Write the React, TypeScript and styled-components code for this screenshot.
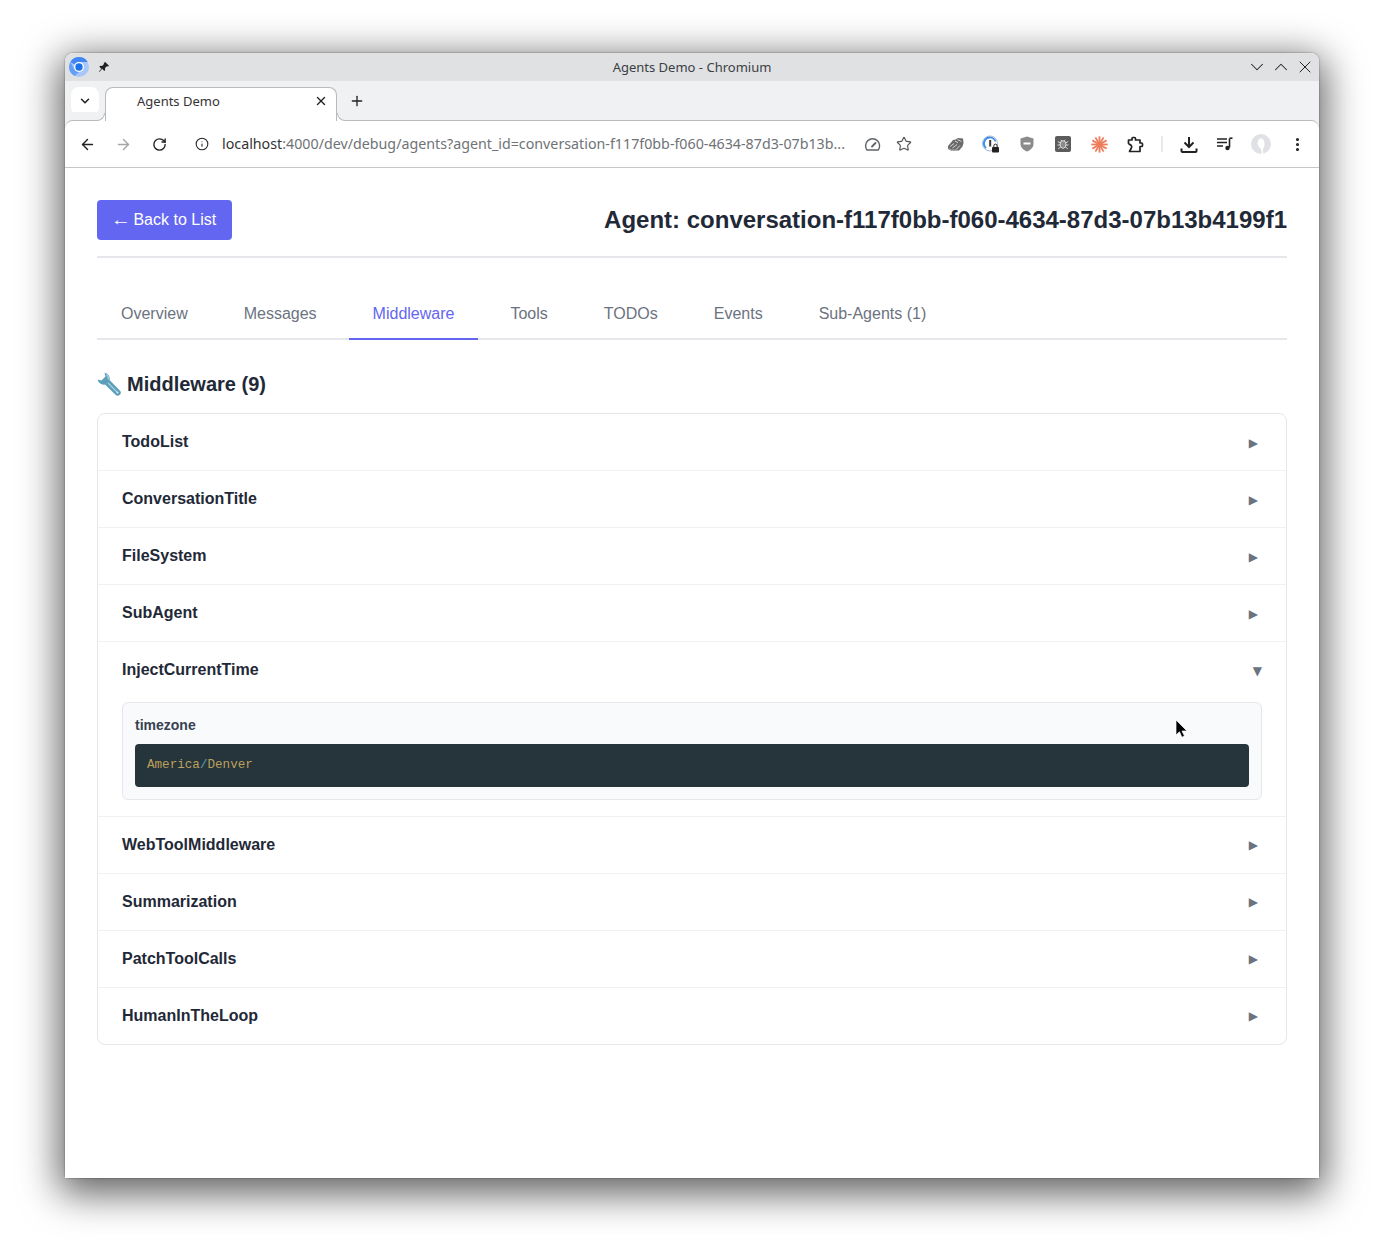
import styled, { createGlobalStyle } from "styled-components";
import {
    ArrowLeft,
    ArrowRight,
    ChevronDown,
    ChevronUp,
    EllipsisVertical,
    Info,
    Plus,
    RotateCw,
    Star,
    X,
} from "lucide-react";

const MIDDLEWARE = [
    "TodoList",
    "ConversationTitle",
    "FileSystem",
    "SubAgent",
    "InjectCurrentTime",
    "WebToolMiddleware",
    "Summarization",
    "PatchToolCalls",
    "HumanInTheLoop",
];

const TABS = ["Overview", "Messages", "Middleware", "Tools", "TODOs", "Events", "Sub-Agents (1)"];

const OPEN_ITEM = MIDDLEWARE.indexOf("InjectCurrentTime");

export default function App() {
    return (
        <Desktop>
            <GlobalStyle />
            <Window>
                <TitleBar>
                    <TitleLeft>
                        <ChromiumLogo />
                        <PinIcon />
                    </TitleLeft>
                    <WindowTitle>Agents Demo - Chromium</WindowTitle>
                    <WindowControls>
                        <ChevronDown size={22} strokeWidth={1.1} />
                        <ChevronUp size={22} strokeWidth={1.1} />
                        <CloseGlyph size={20} strokeWidth={1.2} />
                    </WindowControls>
                </TitleBar>

                <TabStrip>
                    <TabSearch>
                        <ChevronDown size={14} strokeWidth={2.6} />
                    </TabSearch>
                    <BrowserTab>
                        <TabFlare $side="left" />
                        <TabTitle>Agents Demo</TabTitle>
                        <X size={14} strokeWidth={2.4} />
                        <TabFlare $side="right" />
                    </BrowserTab>
                    <NewTab>
                        <Plus size={16} strokeWidth={2} />
                    </NewTab>
                </TabStrip>

                <Toolbar>
                    <ToolSlot><ArrowLeft size={17} strokeWidth={2} /></ToolSlot>
                    <ToolSlot $muted><ArrowRight size={17} strokeWidth={2} /></ToolSlot>
                    <ToolSlot><RotateCw size={15} strokeWidth={2.2} /></ToolSlot>
                    <UrlBar>
                        <Info size={14} strokeWidth={1.8} />
                        <UrlText>
                            localhost<UrlRest>:4000/dev/debug/agents?agent_id=conversation-f117f0bb-f060-4634-87d3-07b13b...</UrlRest>
                        </UrlText>
                    </UrlBar>
                    <UrlAction><GaugeIcon /></UrlAction>
                    <UrlAction><Star size={16} strokeWidth={1.7} color="#555" /></UrlAction>
                    <ExtensionGap />
                    <ToolSlot><ShoeIcon /></ToolSlot>
                    <ToolSlot><KeyBadgeIcon /></ToolSlot>
                    <ToolSlot><ShieldIcon /></ToolSlot>
                    <ToolSlot><BugIcon /></ToolSlot>
                    <ToolSlot><SparkIcon /></ToolSlot>
                    <ToolSlot><PuzzleIcon /></ToolSlot>
                    <ToolDivider />
                    <ToolSlot><DownloadIcon /></ToolSlot>
                    <ToolSlot><QueueIcon /></ToolSlot>
                    <ToolSlot><AvatarIcon /></ToolSlot>
                    <ToolSlot><EllipsisVertical size={17} strokeWidth={2.4} /></ToolSlot>
                </Toolbar>

                <Page>
                    <PageHeader>
                        <BackButton><BackArrow>←</BackArrow> Back to List</BackButton>
                        <AgentTitle>Agent: conversation-f117f0bb-f060-4634-87d3-07b13b4199f1</AgentTitle>
                    </PageHeader>

                    <TabRow>
                        {TABS.map((tab) => (
                            <PageTab key={tab} $active={tab === "Middleware"}>{tab}</PageTab>
                        ))}
                    </TabRow>

                    <SectionTitle>
                        <WrenchIcon />
                        Middleware (9)
                    </SectionTitle>

                    <Accordion>
                        {MIDDLEWARE.map((name, i) => {
                            const open = i === OPEN_ITEM;
                            return (
                                <Item key={name}>
                                    <ItemHeader>
                                        <ItemName>{name}</ItemName>
                                        <Caret $open={open} $below={i > OPEN_ITEM}>{open ? "▼" : "▶"}</Caret>
                                    </ItemHeader>
                                    {open && (
                                        <ItemBody>
                                            <ConfigBox>
                                                <ConfigKey>timezone</ConfigKey>
                                                <CodeBlock>
                                                    America<Slash>/</Slash>Denver
                                                </CodeBlock>
                                            </ConfigBox>
                                        </ItemBody>
                                    )}
                                </Item>
                            );
                        })}
                    </Accordion>
                </Page>
                <Cursor />
            </Window>
        </Desktop>
    );
}

function ChromiumLogo() {
    return (
        <svg width="20" height="20" viewBox="0 0 20 20">
            <circle cx="10" cy="10" r="10" fill="#a8c7fa" />
            <path d="M10 0a10 10 0 0 1 8.660 5H10a5 5 0 0 0-4.330 2.500L1.340 5A10 10 0 0 1 10 0z" fill="#4285f4" />
            <path d="M0 10a10 10 0 0 1 1.340-5l4.330 7.500A5 5 0 0 0 10 15l-4.330 4A10 10 0 0 1 0 10z" fill="#669df6" />
            <circle cx="10" cy="10" r="5" fill="#fff" />
            <circle cx="10" cy="10" r="3.700" fill="#1a73e8" />
        </svg>
    );
}

function PinIcon() {
    return (
        <svg width="12" height="12" viewBox="0 0 12 12">
            <path d="M7.200 1 11 4.800l-1 .6-1.100-.2L7 7.100l.2 1.800-1 1-2-2.100L1.400 11 1 10.600l2.300-2.900-2-2 1-1 1.800.2 1.900-1.900-.2-1.100z" fill="#222" />
        </svg>
    );
}

function GaugeIcon() {
    return (
        <svg width="17" height="17" viewBox="0 0 17 17" fill="none" stroke="#5f6368" strokeWidth="1.400">
            <path d="M3 14h11.200a7 7 0 1 0-11.200 0z" strokeLinejoin="round" />
            <path d="m8 10.500 3.500-3.500" strokeWidth="1.800" strokeLinecap="round" />
        </svg>
    );
}

function ShoeIcon() {
    return (
        <svg width="17" height="15" viewBox="0 0 17 15">
            <path d="M1 9 4 5.500 6 3l2.500-.5L11 1l5 .5.500 4.500-1 3.500-3.500 4H4l-3-1.500z" fill="#6a6a6a" />
            <path d="M3 9.500l4-3M5.500 11l4.500-3.500M9 12.500l4-4M8 4l3 1.500M10.500 2.500l4 2" stroke="#d5d5d5" strokeWidth="1" fill="none" />
            <path d="M1.500 11.500l3 1.500h6" stroke="#a5a5a5" strokeWidth="1" fill="none" />
        </svg>
    );
}

function KeyBadgeIcon() {
    return (
        <svg width="18" height="18" viewBox="0 0 18 18">
            <circle cx="8" cy="8.500" r="7.500" fill="#fff" stroke="#a9b8cc" strokeWidth="1" />
            <path d="M8 2.500a6 6 0 0 0-4 10.500" fill="none" stroke="#3d8fef" strokeWidth="2" />
            <path d="M8 2.500a6 6 0 0 1 5.500 4" fill="none" stroke="#3d8fef" strokeWidth="1.600" />
            <rect x="7.200" y="5" width="2" height="6.500" fill="#3a3a3a" />
            <rect x="10" y="12" width="7" height="5.500" rx="1" fill="#222" />
            <path d="M11.800 12v-1.200a1.700 1.700 0 0 1 3.400 0V12" fill="none" stroke="#222" strokeWidth="1" />
        </svg>
    );
}

function ShieldIcon() {
    return (
        <svg width="14" height="16" viewBox="0 0 14 16">
            <path d="M7 .5 13.500 2.500V8c0 3.500-3 6-6.500 7.500C3.500 14 .5 11.500.5 8V2.500z" fill="#8b8b8b" />
            <rect x="3.500" y="6.500" width="7" height="2" fill="#fff" />
        </svg>
    );
}

function BugIcon() {
    return (
        <svg width="16" height="16" viewBox="0 0 16 16">
            <rect width="16" height="16" rx="2" fill="#5c5c5c" />
            <ellipse cx="8" cy="8.500" rx="3" ry="3.800" fill="#8a8a8a" stroke="#dadada" strokeWidth="1" />
            <path d="M2.800 5.500 5.500 7M13.200 5.500 10.500 7M2.500 9h3M13.500 9h-3M3.200 12.800 5.500 11M12.800 12.800 10.500 11M5.800 3.800 7 5.200M10.200 3.800 9 5.200" stroke="#dadada" strokeWidth="1" />
        </svg>
    );
}

function SparkIcon() {
    const rays = [0, 30, 60, 90, 120, 150, 180, 210, 240, 270, 300, 330];
    return (
        <svg width="17" height="17" viewBox="0 0 17 17">
            {rays.map((r) => (
                <line key={r} x1="8.500" y1="8.500" x2="8.500" y2="0.300" stroke="#ee7d5c" strokeWidth="1.800" transform={`rotate(${r} 8.500 8.500)`} />
            ))}
        </svg>
    );
}

function PuzzleIcon() {
    return (
        <svg width="17" height="17" viewBox="0 0 17 17" fill="none" stroke="#222" strokeWidth="1.700" strokeLinejoin="round">
            <path d="M1.500 4H5V2.500a1 1 0 0 1 1-1h1.500a1 1 0 0 1 1 1V4H13v3h1.500a1 1 0 0 1 1 1v1.500a1 1 0 0 1-1 1H13v5H2.500l1.800-3.500a2 2 0 0 0 0-2.500L1.500 7.500z" />
        </svg>
    );
}

function DownloadIcon() {
    return (
        <svg width="18" height="17" viewBox="0 0 18 17" fill="none" stroke="#222" strokeWidth="2">
            <path d="M9 1v10M4.500 6.500 9 11l4.500-4.500" />
            <path d="M1.500 12.500v2.500a1 1 0 0 0 1 1h13a1 1 0 0 0 1-1v-2.500" />
        </svg>
    );
}

function QueueIcon() {
    return (
        <svg width="16" height="14" viewBox="0 0 16 14" fill="none" stroke="#222" strokeWidth="1.500">
            <path d="M0 2h10M0 5.500h10M0 9h6" />
            <path d="M12.500 1.500v9" strokeWidth="1.600" />
            <path d="M12.500 1.200H15.500" strokeWidth="1.600" />
            <circle cx="10.500" cy="11" r="2.200" fill="#222" stroke="none" />
        </svg>
    );
}

function AvatarIcon() {
    return (
        <svg width="20" height="20" viewBox="0 0 20 20">
            <circle cx="10" cy="10" r="10" fill="#dfe1e4" />
            <path d="M6.500 10c0-3.500 1.500-5.500 3.500-5.500s3.500 2 3.500 5.500c0 3-1.200 4-1.500 5.500-.2 1.500.2 2.500.2 4.500h-1.500c0-3-.5-4-1-5.500-.8-1-2.700-1.500-2.700-4.500z" fill="#fff" />
        </svg>
    );
}

function WrenchIcon() {
    return (
        <WrenchSvg width="24" height="24" viewBox="0 0 24 24">
            <path d="M7.500.7a6 6 0 0 1 5 7.300l10.300 10.500a3 3 0 0 1-4.300 4.300L8 12.500a6 6 0 0 1-7.300-5L4.500 8.500l4-4z" fill="#5c9fba" />
            <path d="M9.500 2.500a4.500 4.500 0 0 1 1.500 5M11 11l9 9" stroke="#a6d2de" strokeWidth="1.300" fill="none" />
            <circle cx="20.500" cy="20.500" r="1" fill="#dff0f5" />
        </WrenchSvg>
    );
}

function Cursor() {
    return (
        <CursorSvg width="14" height="20" viewBox="0 0 14 20">
            <path d="M1 1v15l3.500-3.200 2.400 5.400 2.600-1.100L7 12h5z" fill="#000" stroke="#fff" strokeWidth="0.700" />
        </CursorSvg>
    );
}

const GlobalStyle = createGlobalStyle`
    html, body {
        margin: 0;
        padding: 0;
        background: #fff;
    }

    * {
        box-sizing: border-box;
    }
`;

const Desktop = styled.div`
    width: 1384px;
    height: 1255px;
    padding: 53px 65px 0;
    overflow: hidden;
    background: #fff;
`;

const Window = styled.div`
    position: relative;
    width: 1254px;
    height: 1125px;
    display: flex;
    flex-direction: column;
    background: #fff;
    border-radius: 8px 8px 3px 3px;
    box-shadow: 0 10px 38px 6px rgba(0, 0, 0, 0.62), 0 0 2px rgba(0, 0, 0, 0.5);
`;

const TitleBar = styled.div`
    height: 28px;
    flex: none;
    display: grid;
    grid-template-columns: 1fr auto 1fr;
    align-items: center;
    background: #dfe1e3;
    border-radius: 8px 8px 0 0;
`;

const TitleLeft = styled.div`
    display: flex;
    align-items: center;
    gap: 9px;
    padding-left: 4px;
`;

const WindowTitle = styled.div`
    font-family: "Noto Sans", sans-serif;
    font-size: 13px;
    color: #3c4043;
`;

const WindowControls = styled.div`
    display: flex;
    justify-content: flex-end;
    align-items: center;
    gap: 2px;
    padding-right: 4px;
    color: #222;
`;

const CloseGlyph = styled(X)`
    margin-left: 1px;
`;

const TabStrip = styled.div`
    height: 39px;
    flex: none;
    display: flex;
    align-items: flex-start;
    padding: 6px 0 0 6px;
    background: #eff1f3;
`;

const TabSearch = styled.div`
    width: 28px;
    height: 28px;
    display: flex;
    align-items: center;
    justify-content: center;
    margin-right: 6px;
    background: #fff;
    border-radius: 8px;
    color: #222;
`;

const BrowserTab = styled.div`
    position: relative;
    z-index: 2;
    width: 232px;
    height: 34px;
    display: flex;
    align-items: center;
    justify-content: space-between;
    padding: 0 8px 8px 31px;
    background: #fff;
    border: 1px solid #b8babd;
    border-bottom: none;
    border-radius: 8px 8px 0 0;
    color: #222;
`;

const TabFlare = styled.span<{ $side: "left" | "right" }>`
    position: absolute;
    bottom: 0;
    ${(p) => (p.$side === "left" ? "left: -9px;" : "right: -9px;")}
    width: 8px;
    height: 8px;
    background: #fff;

    &::before {
        content: "";
        position: absolute;
        inset: 0;
        background: #eff1f3;
        border-bottom: 1px solid #b8babd;
        ${(p) =>
            p.$side === "left"
                ? "border-right: 1px solid #b8babd; border-bottom-right-radius: 8px;"
                : "border-left: 1px solid #b8babd; border-bottom-left-radius: 8px;"}
    }
`;

const TabTitle = styled.span`
    font-family: "Noto Sans", sans-serif;
    font-size: 13px;
    color: #333;
`;

const NewTab = styled.div`
    width: 28px;
    height: 28px;
    margin-left: 6px;
    display: flex;
    align-items: center;
    justify-content: center;
    color: #222;
`;

const Toolbar = styled.div`
    height: 48px;
    flex: none;
    display: flex;
    align-items: center;
    padding: 0 4px;
    background: #fff;
    border-top: 1px solid #b8babd;
    border-bottom: 1px solid #c4c6c9;
    border-radius: 8px 8px 0 0;
    box-shadow: 0 -8px 0 #eff1f3;
`;

const ToolSlot = styled.div<{ $muted?: boolean }>`
    width: 36px;
    height: 36px;
    flex: none;
    display: flex;
    align-items: center;
    justify-content: center;
    color: ${(p) => (p.$muted ? "#a4a6a9" : "#222")};
`;

const UrlBar = styled.div`
    width: 679px;
    flex: none;
    display: flex;
    align-items: center;
    gap: 13px;
    padding-left: 18px;
    color: #222;
`;

const UrlText = styled.div`
    padding-bottom: 2px;
    font-family: "Noto Sans", sans-serif;
    font-size: 14.25px;
    color: #333;
    white-space: nowrap;
`;

const UrlRest = styled.span`
    color: #6f7276;
`;

const UrlAction = styled.div`
    width: 32px;
    height: 32px;
    flex: none;
    display: flex;
    align-items: center;
    justify-content: center;
`;

const ExtensionGap = styled.div`
    width: 17px;
    flex: none;
`;

const ToolDivider = styled.div`
    width: 2px;
    height: 16px;
    flex: none;
    margin: 0 8px;
    background: #e8e9eb;
`;

const Page = styled.div`
    flex: 1;
    padding: 32px;
    background: #fff;
    font-family: "Liberation Sans", Arial, sans-serif;
`;

const PageHeader = styled.div`
    display: flex;
    align-items: center;
    justify-content: space-between;
    padding-bottom: 16px;
    border-bottom: 2px solid #e5e7eb;
    margin-bottom: 32px;
`;

const BackButton = styled.button`
    height: 40px;
    padding: 0 16px;
    border: none;
    border-radius: 4px;
    background: #6366f1;
    color: #fff;
    font-family: inherit;
    font-size: 16px;
`;

const BackArrow = styled.span`
    display: inline-block;
    transform: scaleX(1.25);
`;

const AgentTitle = styled.h1`
    margin: 0;
    font-size: 24px;
    font-weight: 700;
    line-height: 28px;
    color: #1f2937;
`;

const TabRow = styled.div`
    display: flex;
    height: 50px;
    border-bottom: 2px solid #e5e7eb;
    margin-bottom: 32px;
`;

const PageTab = styled.div<{ $active?: boolean }>`
    height: 50px;
    padding: 15px 24px 0 24px;
    margin-right: 8px;
    font-size: 16px;
    line-height: 18px;
    color: ${(p) => (p.$active ? "#6366f1" : "#6b7280")};
    border-bottom: 2px solid ${(p) => (p.$active ? "#6366f1" : "transparent")};
`;

const SectionTitle = styled.h2`
    display: flex;
    align-items: center;
    gap: 6px;
    height: 24px;
    margin: 0 0 17px;
    font-size: 20px;
    font-weight: 700;
    color: #1f2937;
`;

const WrenchSvg = styled.svg`
    flex: none;
`;

const Accordion = styled.div`
    border: 1px solid #e5e7eb;
    border-radius: 8px;
    overflow: hidden;
`;

const Item = styled.div`
    border-bottom: 1px solid #f0f1f3;

    &:last-child {
        border-bottom: none;
    }
`;

const ItemHeader = styled.div`
    height: 56px;
    display: flex;
    align-items: center;
    justify-content: space-between;
    padding: 0 24px;
`;

const ItemName = styled.div`
    font-size: 16px;
    font-weight: 700;
    color: #1f2937;
`;

const Caret = styled.span<{ $open: boolean; $below: boolean }>`
    font-family: "DejaVu Sans", sans-serif;
    font-size: 12px;
    color: #6b7280;
    margin-top: ${(p) => (p.$below ? "0" : "2px")};
    padding-right: ${(p) => (p.$open ? "0" : "4px")};
`;

const ItemBody = styled.div`
    padding: 4px 24px 16px;
`;

const ConfigBox = styled.div`
    padding: 12px;
    background: #f9fafb;
    border: 1px solid #e5e7eb;
    border-radius: 6px;
`;

const ConfigKey = styled.div`
    padding-top: 1px;
    font-size: 14px;
    font-weight: 700;
    line-height: 18px;
    color: #374151;
    margin-bottom: 10px;
`;

const CodeBlock = styled.pre`
    margin: 0;
    height: 43px;
    padding: 0 12px 2px;
    display: flex;
    align-items: center;
    background: #25353b;
    border-radius: 4px;
    font-family: Courier, "Liberation Mono", monospace;
    font-size: 12.6px;
    color: #bd9f5c;
`;

const Slash = styled.span`
    color: #5f9db5;
`;

const CursorSvg = styled.svg`
    position: absolute;
    left: 1110px;
    top: 666px;
    z-index: 5;
`;
